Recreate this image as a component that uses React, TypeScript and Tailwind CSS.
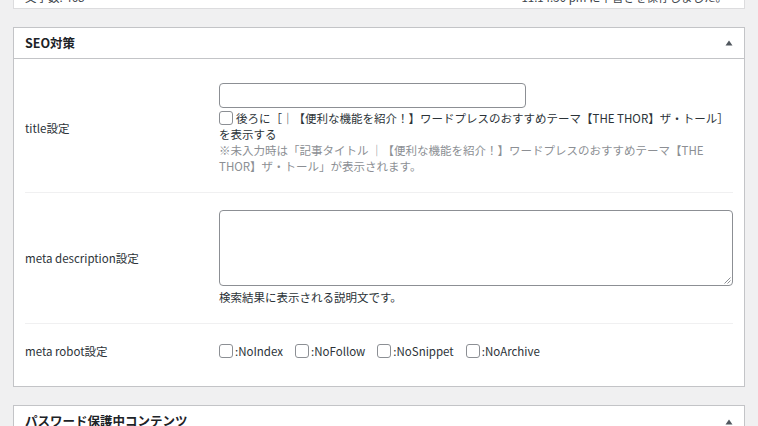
import React from 'react';

const font = { fontFamily: '"Noto Sans CJK JP", "Noto Sans", sans-serif' };

function Check() {
  return (
    <span className="inline-block w-[14px] h-[14px] shrink-0 rounded-[3px] border border-[#8c8f94] bg-white" />
  );
}

function Toggle() {
  return (
    <svg width="8" height="6" viewBox="0 0 8 6" className="shrink-0">
      <path d="M4 0.5 L7.5 5.5 L0.5 5.5 Z" fill="#50575e" />
    </svg>
  );
}

export default function App() {
  return (
    <div className="min-h-screen bg-[#f0f0f1] px-[13px] text-[#1d2327] overflow-hidden" style={font}>
      {/* 文字数バー（上が切れている） */}
      <div className="mt-[-21px] h-[30px] bg-white border border-[#dcdcde] flex items-end justify-between px-[11px] pb-[4px] text-[11.5px] leading-[14px] text-[#3c434a]">
        <span>文字数: 468</span>
        <span className="mr-[6px]">11:14:50 pm に下書きを保存しました。</span>
      </div>

      {/* SEO対策 */}
      <div className="mt-[18px] bg-white border border-[#c3c4c7]">
        <div className="h-[31px] flex items-center justify-between pl-[11px] pr-[11px] border-b border-[#c3c4c7]">
          <h2 className="text-[12.5px] font-bold">SEO対策</h2>
          <Toggle />
        </div>
        <div className="px-[11px] text-[11.5px] leading-[16px] text-[#2c3338]">
          {/* title設定 */}
          <div className="flex items-center border-b border-[#f0f0f1] pt-[24px] pb-[18px]">
            <div className="w-[194px] shrink-0 pb-[2px]">title設定</div>
            <div className="flex-1">
              <div className="w-[307px] h-[25px] rounded-[4px] border border-[#8c8f94] bg-white" />
              <div className="mt-[2px]">
                <span className="inline-flex align-[-2px] mr-[3px]"><Check /></span>
                後ろに［｜【便利な機能を紹介！】ワードプレスのおすすめテーマ【THE THOR】ザ・トール］を表示する
              </div>
              <p className="text-[#8c8f94]">
                ※未入力時は「記事タイトル ｜【便利な機能を紹介！】ワードプレスのおすすめテーマ【THE THOR】ザ・トール」が表示されます。
              </p>
            </div>
          </div>

          {/* meta description設定 */}
          <div className="flex items-center border-b border-[#f0f0f1] pt-[17px] pb-[18px]">
            <div className="w-[194px] shrink-0">meta description設定</div>
            <div className="flex-1">
              <div className="relative h-[76px] rounded-[4px] border border-[#8c8f94] bg-white">
                <svg width="7" height="7" viewBox="0 0 7 7" className="absolute right-[1px] bottom-[1px]">
                  <path d="M6.5 0.5 L0.5 6.5 M6.5 3.5 L3.5 6.5" stroke="#8c8f94" strokeWidth="1" />
                </svg>
              </div>
              <p className="mt-[3px]">検索結果に表示される説明文です。</p>
            </div>
          </div>

          {/* meta robot設定 */}
          <div className="flex items-center pt-[19px] pb-[27px]">
            <div className="w-[194px] shrink-0">meta robot設定</div>
            <div className="flex items-center gap-[12px]">
              {[':NoIndex', ':NoFollow', ':NoSnippet', ':NoArchive'].map((t) => (
                <label key={t} className="flex items-center gap-[2px]">
                  <Check />
                  <span>{t}</span>
                </label>
              ))}
            </div>
          </div>
        </div>
      </div>

      {/* パスワード保護中コンテンツ */}
      <div className="mt-[18px] bg-white border border-[#c3c4c7]">
        <div className="h-[31px] flex items-center justify-between px-[11px]">
          <h2 className="text-[12.5px] font-bold">パスワード保護中コンテンツ</h2>
          <Toggle />
        </div>
      </div>
    </div>
  );
}
